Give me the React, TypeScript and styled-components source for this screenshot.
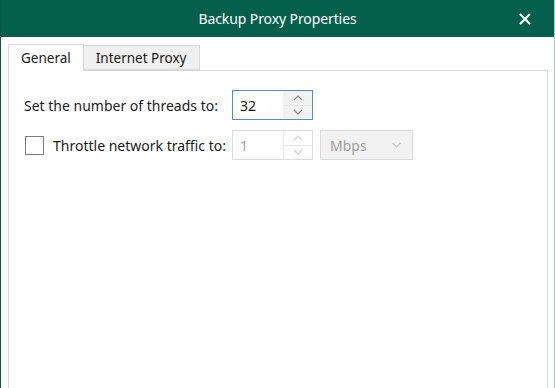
import React from 'react';
import styled, { createGlobalStyle } from 'styled-components';

const GlobalStyle = createGlobalStyle`
  html, body {
    margin: 0;
    padding: 0;
    background: #ffffff;
  }
  body {
    font-family: 'Noto Sans', 'Open Sans', sans-serif;
  }
`;

const Window = styled.div`
  width: 555px;
  height: 388px;
  box-sizing: border-box;
  border-left: 1px solid #0b5a48;
  border-right: 1px solid #a9cfc3;
  display: flex;
  flex-direction: column;
  overflow: hidden;
  background: #ffffff;
`;

const TitleBar = styled.div`
  height: 37px;
  flex: none;
  background-color: #04604c;
  display: grid;
  grid-template-columns: 1fr auto 1fr;
  align-items: center;
  color: #ffffff;
`;

const Title = styled.div`
  grid-column: 2;
  font-size: 14px;
  letter-spacing: -0.1px;
`;

const CloseButton = styled.button`
  grid-column: 3;
  justify-self: end;
  margin-right: 18px;
  width: 22px;
  height: 22px;
  padding: 0;
  border: none;
  background: transparent;
  display: flex;
  align-items: center;
  justify-content: center;
  cursor: pointer;
`;

const Body = styled.div`
  flex: 1;
  display: flex;
  flex-direction: column;
  padding: 6px 6px 0 7px;
`;

const TabStrip = styled.div`
  display: flex;
  align-items: flex-end;
  height: 27px;
  position: relative;
  z-index: 1;
`;

const Tab = styled.div<{ active?: boolean }>`
  box-sizing: border-box;
  height: ${p => (p.active ? '27px' : '25px')};
  margin-bottom: ${p => (p.active ? '-1px' : '0')};
  padding: 0 ${p => (p.active ? '12px' : '12px')};
  border: 1px solid #d9d9d9;
  border-bottom: ${p => (p.active ? 'none' : '1px solid #d9d9d9')};
  border-left: ${p => (p.active ? '1px solid #d9d9d9' : 'none')};
  background: ${p => (p.active ? '#ffffff' : '#f0f0f0')};
  display: flex;
  align-items: center;
  font-size: 13.5px;
  color: #1a1a1a;
`;

const Panel = styled.div`
  flex: 1;
  border: 1px solid #d9d9d9;
  border-bottom: none;
  padding: 19px 0 0 15px;
`;

const Form = styled.div`
  display: grid;
  grid-template-columns: 201px 81px 93px;
  column-gap: 7px;
  row-gap: 10px;
  align-items: center;
`;

const LabelCell = styled.div`
  display: flex;
  align-items: center;
  gap: 9px;
  font-size: 14px;
  color: #1a1a1a;
  white-space: nowrap;
`;

const Checkbox = styled.span`
  width: 19px;
  height: 19px;
  box-sizing: border-box;
  border: 1px solid #7d7d7d;
  margin-left: 1px;
  background: #ffffff;
  flex: none;
`;

const Spin = styled.div<{ focused?: boolean; disabled?: boolean }>`
  box-sizing: border-box;
  height: 30px;
  display: flex;
  border: 1px solid ${p => (p.focused ? '#5b8cc0' : '#dcdcdc')};
  background: #ffffff;
`;

const SpinValue = styled.div<{ disabled?: boolean }>`
  flex: 1;
  display: flex;
  align-items: center;
  padding-left: 7px;
  font-size: 14px;
  color: ${p => (p.disabled ? '#a0a0a0' : '#1a1a1a')};
`;

const SpinButtons = styled.div<{ disabled?: boolean }>`
  width: 28px;
  display: flex;
  flex-direction: column;
  background: ${p => (p.disabled ? '#ffffff' : '#f2f2f2')};
  border-left: 1px solid ${p => (p.disabled ? '#ececec' : '#f2f2f2')};
`;

const SpinButton = styled.div`
  flex: 1;
  display: flex;
  align-items: center;
  justify-content: center;
  & + & {
    border-top: 1px solid #e6e6e6;
  }
`;

const Select = styled.div`
  box-sizing: border-box;
  height: 30px;
  display: flex;
  align-items: center;
  justify-content: space-between;
  padding: 0 10px 0 9px;
  border: 1px solid #dcdcdc;
  background: #f2f2f2;
  font-size: 14px;
  color: #a0a0a0;
`;

const Chevron: React.FC<{ up?: boolean; color: string; width?: number }> = ({ up, color, width = 10 }) => (
  <svg width={width} height="6" viewBox="0 0 10 6">
    <path
      d={up ? 'M1 5 L5 1 L9 5' : 'M1 1 L5 5 L9 1'}
      fill="none"
      stroke={color}
      strokeWidth="1.2"
    />
  </svg>
);

const SpinBox: React.FC<{ value: string; focused?: boolean; disabled?: boolean }> = ({ value, focused, disabled }) => {
  const arrow = disabled ? '#d4d4d4' : '#8a8a8a';
  return (
    <Spin focused={focused} disabled={disabled}>
      <SpinValue disabled={disabled}>{value}</SpinValue>
      <SpinButtons disabled={disabled}>
        <SpinButton><Chevron up color={arrow} /></SpinButton>
        <SpinButton><Chevron color={arrow} /></SpinButton>
      </SpinButtons>
    </Spin>
  );
};

export default function App() {
  return (
    <>
      <GlobalStyle />
      <Window>
        <TitleBar>
          <Title>Backup Proxy Properties</Title>
          <CloseButton aria-label="Close">
            <svg width="12" height="12" viewBox="0 0 12 12">
              <path d="M1 1 L11 11 M11 1 L1 11" stroke="#ffffff" strokeWidth="2.2" />
            </svg>
          </CloseButton>
        </TitleBar>
        <Body>
          <TabStrip>
            <Tab active>General</Tab>
            <Tab>Internet Proxy</Tab>
          </TabStrip>
          <Panel>
            <Form>
              <LabelCell>Set the number of threads to:</LabelCell>
              <SpinBox value="32" focused />
              <div />
              <LabelCell>
                <Checkbox />
                Throttle network traffic to:
              </LabelCell>
              <SpinBox value="1" disabled />
              <Select>
                Mbps
                <Chevron color="#c8c8c8" width={11} />
              </Select>
            </Form>
          </Panel>
        </Body>
      </Window>
    </>
  );
}
